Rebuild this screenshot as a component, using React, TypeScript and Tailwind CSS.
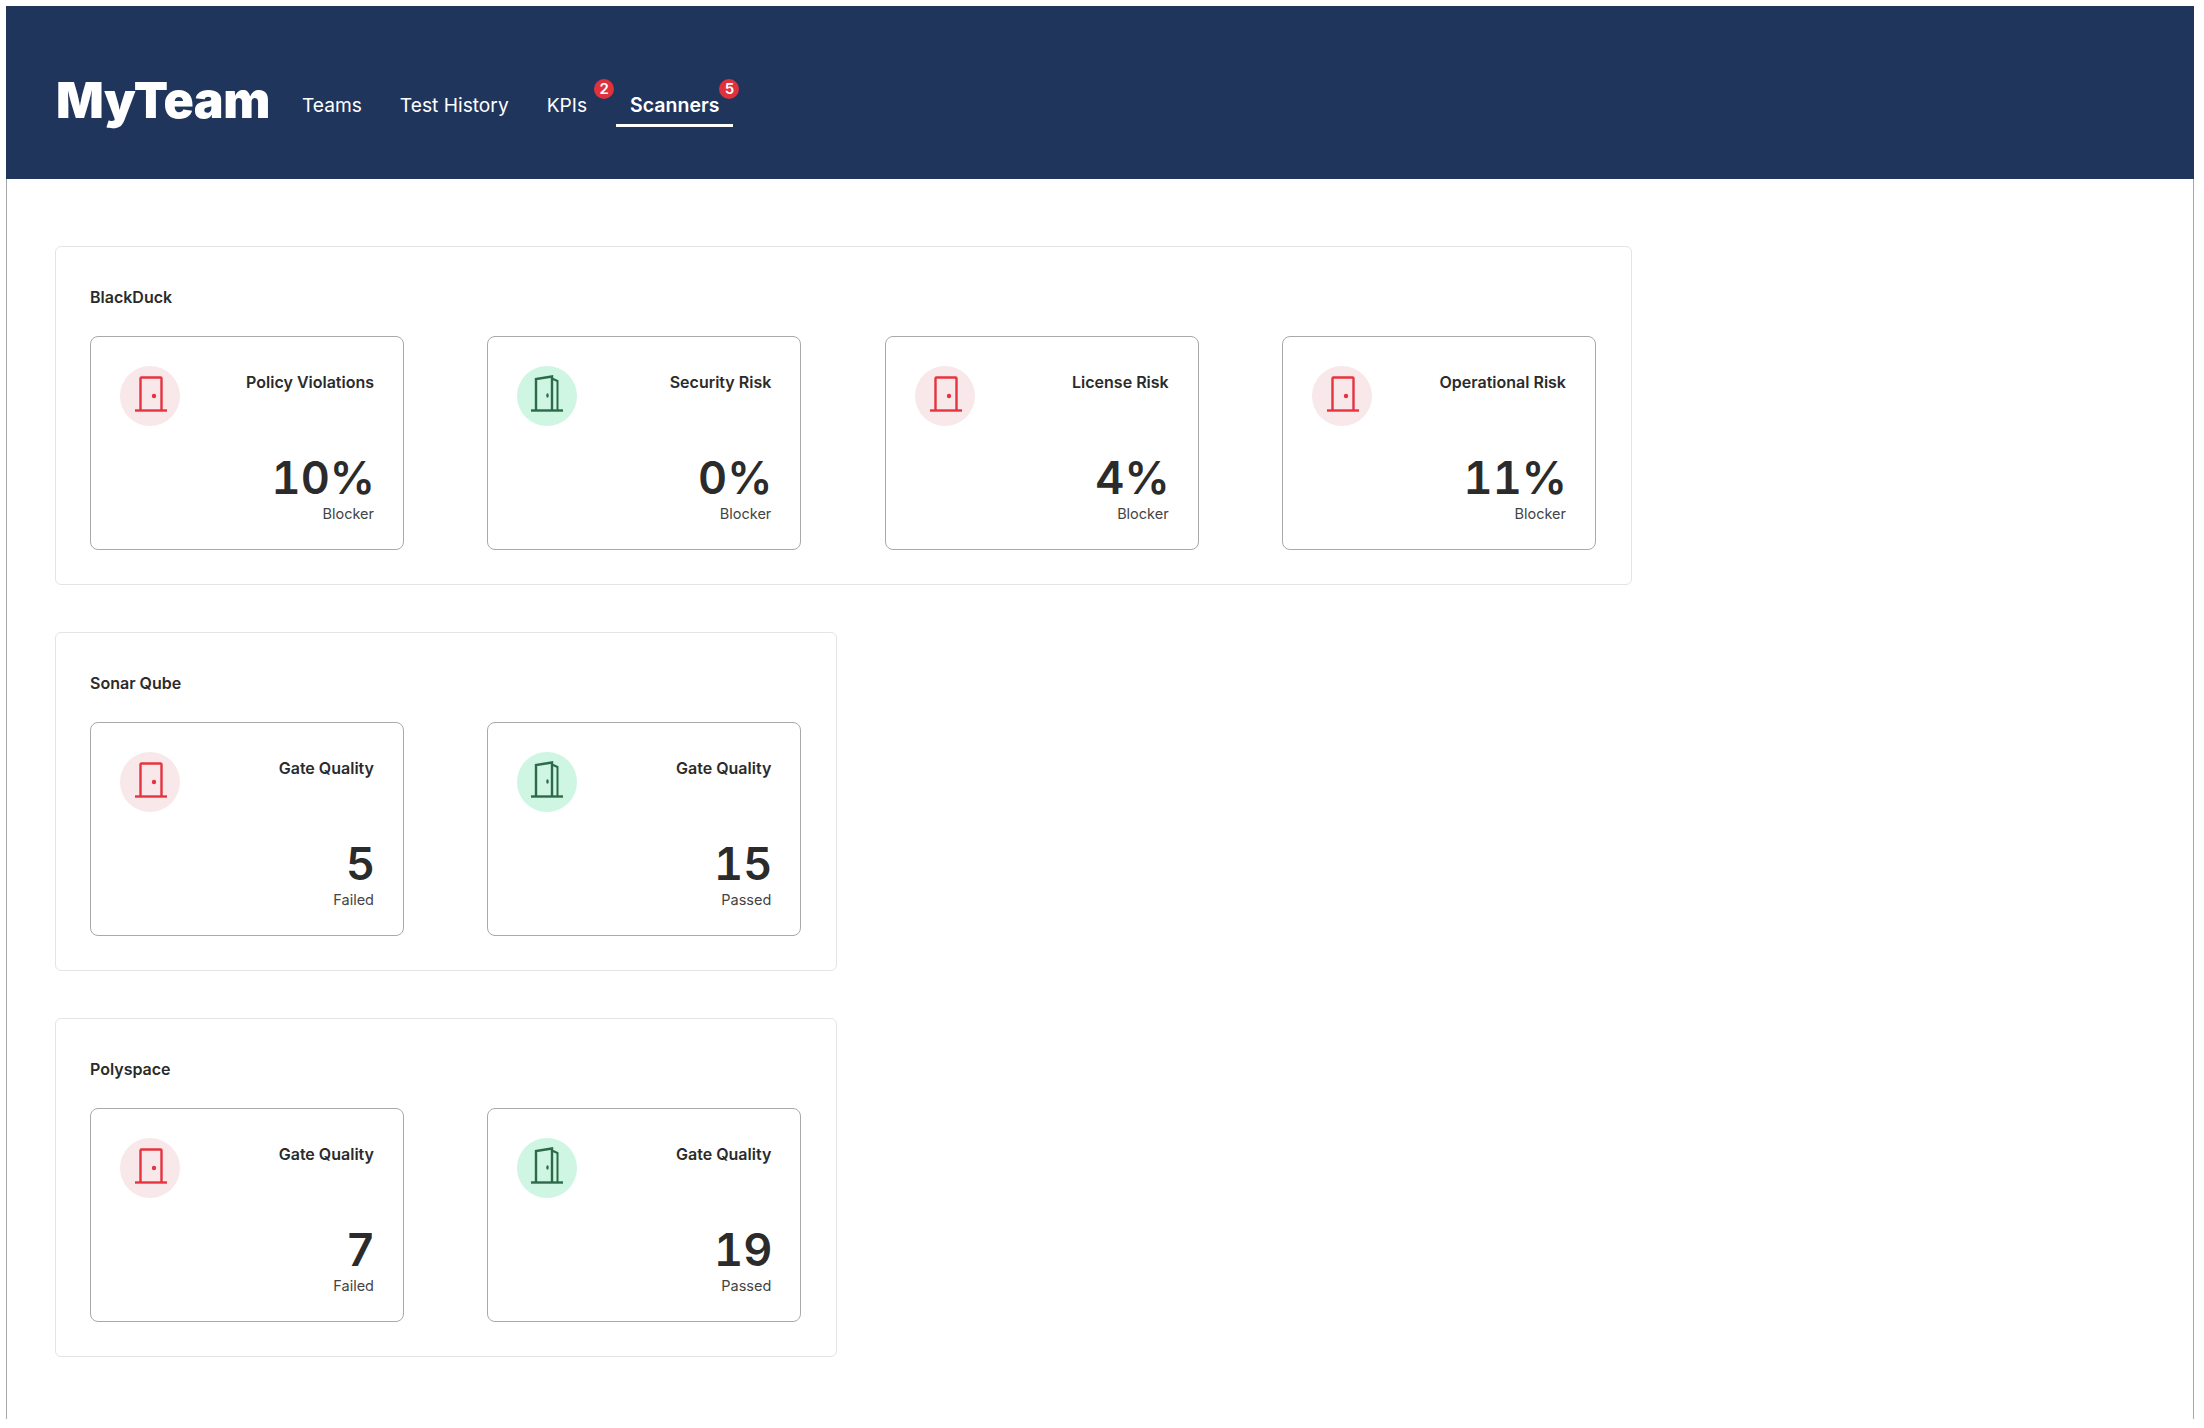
const RedDoor = () => (
  <svg viewBox="0 0 60 60" className="w-[60px] h-[60px]" fill="none" stroke="#e5343f" strokeWidth="2.4">
    <path d="M15 44.5H47" />
    <path d="M20.5 44.5V12.5a1 1 0 0 1 1-1H40.5a1 1 0 0 1 1 1V44.5" />
    <circle cx="34" cy="30" r="2.2" fill="#e5343f" stroke="none" />
  </svg>
);

const GreenDoor = () => (
  <svg viewBox="0 0 60 60" className="w-[60px] h-[60px]" fill="none" stroke="#2c6a49" strokeWidth="2.4">
    <path d="M14 44.5H46" />
    <path d="M19 44.5V13L35 10.5V44.5" />
    <path d="M35 12.5L40.5 15V44.5" strokeWidth="2" />
    <ellipse cx="30.5" cy="29.5" rx="1.2" ry="2.2" fill="#2c6a49" stroke="none" />
  </svg>
);

type Item = { title: string; value: string; label: string; ok: boolean };

const Card = ({ title, value, label, ok }: Item) => (
  <div className="w-[314px] h-[214px] rounded-[8px] border border-[#a9a9a9] bg-white pt-[29px] pl-[29px] pr-[29px] flex flex-col">
    <div className="flex justify-between items-start h-[60px]">
      <div className={ok ? "w-[60px] h-[60px] rounded-full bg-[#cff5e3]" : "w-[60px] h-[60px] rounded-full bg-[#f8e8ea]"}>
        {ok ? <GreenDoor /> : <RedDoor />}
      </div>
      <div className="text-[16px] leading-[20px] mt-[6px] font-semibold text-[#2b2b2b]">{title}</div>
    </div>
    <div className="mt-[24px] -mr-px text-right text-[45px] leading-[56px] font-semibold text-[#2b2b2b] tabular-nums">{value}</div>
    <div className="-mt-px text-right text-[14.5px] leading-[18px] text-[#444444]">{label}</div>
  </div>
);

const Section = ({ name, items, wide }: { name: string; items: Item[]; wide?: boolean }) => (
  <section className={wide ? "w-[1577px] h-[339px] rounded-[6px] border border-[#e4e4e4] pt-[40px] px-[34px]" : "w-[782px] h-[339px] rounded-[6px] border border-[#e4e4e4] pt-[40px] px-[34px]"}>
    <h2 className="text-[16px] leading-[20px] font-semibold text-[#2b2b2b]">{name}</h2>
    <div className="mt-[29px] flex gap-[83.33px]">
      {items.map((it, i) => (
        <Card key={i} {...it} />
      ))}
    </div>
  </section>
);

const NavItem = ({ label, badge, active }: { label: string; badge?: number; active?: boolean }) => (
  <div className={active ? "relative ml-[5px] h-[54px] px-[14px] pt-[19px] border-b-[3px] border-white text-[19.5px] leading-[26px] font-semibold text-white" : "relative h-[54px] px-[14px] pt-[19px] border-b-[3px] border-transparent text-[19.2px] leading-[26px] text-white"}>
    {label}
    {badge !== undefined && (
      <span className={active ? "absolute right-[-6px] top-[6px] w-[20px] h-[20px] rounded-full bg-[#e0323c] text-white text-[15px] leading-[20px] text-center font-semibold" : "absolute right-[-13px] top-[6px] w-[20px] h-[20px] rounded-full bg-[#e0323c] text-white text-[15px] leading-[20px] text-center font-semibold"}>
        {badge}
      </span>
    )}
  </div>
);

const blackduck: Item[] = [
  { title: "Policy Violations", value: "10%", label: "Blocker", ok: false },
  { title: "Security Risk", value: "0%", label: "Blocker", ok: true },
  { title: "License Risk", value: "4%", label: "Blocker", ok: false },
  { title: "Operational Risk", value: "11%", label: "Blocker", ok: false },
];

const sonar: Item[] = [
  { title: "Gate Quality", value: "5", label: "Failed", ok: false },
  { title: "Gate Quality", value: "15", label: "Passed", ok: true },
];

const poly: Item[] = [
  { title: "Gate Quality", value: "7", label: "Failed", ok: false },
  { title: "Gate Quality", value: "19", label: "Passed", ok: true },
];

export default function App() {
  return (
    <div className="w-[2204px] h-[1428px] bg-white pt-[6px] pl-[6px] font-['Inter',sans-serif]">
      <div className="w-[2188px] h-[1413px] border-x border-[#a9a9a9]">
        <header className="-mx-px h-[173px] bg-[#20355c] flex items-center pl-[50px]">
          <div className="text-[50px] leading-[60px] font-black text-white tracking-[-0.5px] mr-[18px] mt-[15px]">MyTeam</div>
          <nav className="flex gap-[10px] mt-[14px]">
            <NavItem label="Teams" />
            <NavItem label="Test History" />
            <NavItem label="KPIs" badge={2} />
            <NavItem label="Scanners" badge={5} active />
          </nav>
        </header>
        <main className="pt-[67px] pl-[48px] flex flex-col gap-[47px]">
          <Section name="BlackDuck" items={blackduck} wide />
          <Section name="Sonar Qube" items={sonar} />
          <Section name="Polyspace" items={poly} />
        </main>
      </div>
    </div>
  );
}
